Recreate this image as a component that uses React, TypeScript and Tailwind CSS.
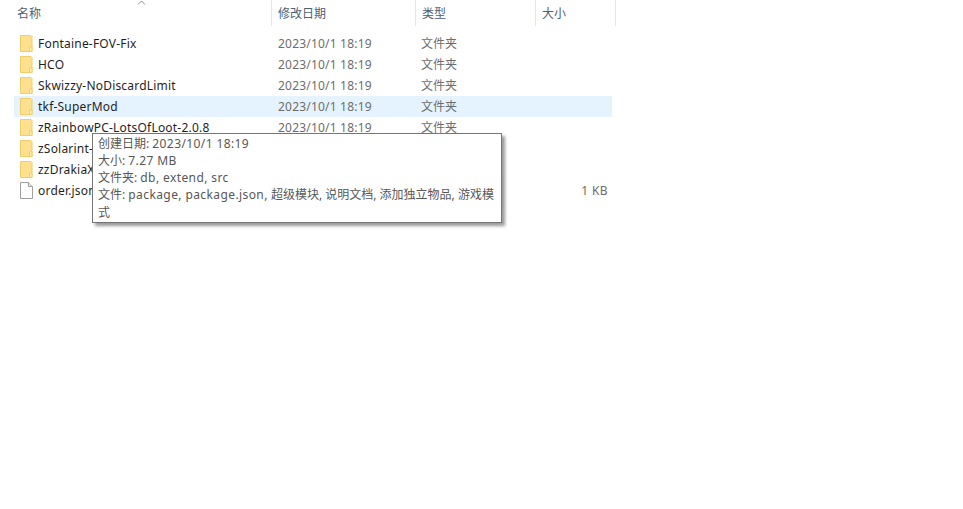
const FONT = "font-['Noto_Sans','Noto_Sans_CJK_SC',sans-serif]";

const rows = [
  { name: "Fontaine-FOV-Fix" },
  { name: "HCO" },
  { name: "Skwizzy-NoDiscardLimit" },
  { name: "tkf-SuperMod", active: true },
  { name: "zRainbowPC-LotsOfLoot-2.0.8" },
  // these three run in behind the tooltip, so name is cut at its edge
  { name: "zSolarint-", covered: true },
  { name: "zzDrakiaX", covered: true },
  { name: "order.json", file: true, covered: true },
];

function FolderIcon() {
  return (
    <svg width="14" height="17" viewBox="0 0 14 17" className="shrink-0">
      <path d="M1.5 0.5 H12 L13 1.5 V16.5 H1.5 Z" fill="#ffe08c" stroke="#f0cd6c" />
      <path d="M10.5 12 V16.5 H13 V11.5 Z" fill="#ffedb8" stroke="#f0cd6c" />
    </svg>
  );
}

function FileIcon() {
  return (
    <svg width="14" height="17" viewBox="0 0 14 17" className="shrink-0">
      <path d="M1.5 0.5 H9.5 L13.5 4.5 V16.5 H1.5 Z" fill="#fff" stroke="#a0a0a0" />
      <path d="M9.5 0.5 V4.5 H13.5" fill="#e8e8e8" stroke="#a0a0a0" />
    </svg>
  );
}

// Latin runs are set a bit wider than the CJK around them
function L({ children }: { children: string }) {
  return <span className="tracking-[0.4px]">{children}</span>;
}

export default function App() {
  return (
    <div className={`relative h-[509px] w-[963px] overflow-hidden bg-white text-[12px] ${FONT}`}>
      <div className="relative flex h-[26px] text-[#4c607a]">
        <div className="w-[272px] border-r border-[#e5e5e5] pl-[17px] leading-[27px]">名称</div>
        <div className="w-[144px] border-r border-[#e5e5e5] pl-[6px] leading-[27px]">修改日期</div>
        <div className="w-[120px] border-r border-[#e5e5e5] pl-[6px] leading-[27px]">类型</div>
        <div className="w-[80px] border-r border-[#e5e5e5] pl-[6px] leading-[27px]">大小</div>
        <svg width="9" height="6" viewBox="0 0 9 6" className="absolute left-[137px] top-0">
          <path d="M1 4.5 L4.5 1 L8 4.5" fill="none" stroke="#8c8c8c" />
        </svg>
      </div>
      <div className="ml-[14px] mt-[7px] w-[598px]">
        {rows.map((row) => (
          <div key={row.name} className={`flex h-[21px] items-center ${row.active ? "bg-[#e5f3ff]" : ""}`}>
            <div className="flex w-[258px] items-center pl-[5px]">
              {row.file ? <FileIcon /> : <FolderIcon />}
              <span
                className={`ml-[5px] whitespace-nowrap tracking-[0.2px] text-[#1f1f1f] ${row.covered ? "max-w-[54px] overflow-hidden" : ""}`}
              >
                {row.name}
              </span>
            </div>
            <div className="w-[143px] pl-[6px] tracking-[0.2px] text-[#6d6d6d]">
              {row.covered ? "" : "2023/10/1 18:19"}
            </div>
            <div className="w-[120px] pl-[6px] text-[#6d6d6d]">{row.covered ? "" : "文件夹"}</div>
            <div className="w-[73px] text-right tracking-[0.4px] text-[#6d6d6d]">{row.file ? "1 KB" : ""}</div>
          </div>
        ))}
      </div>
      <div className="absolute left-[92px] top-[133px] h-[90px] w-[410px] border border-[#767676] bg-white px-[5px] pt-[1px] text-[12px] leading-[17px] text-[#575757] shadow-[3px_3px_3px_rgba(0,0,0,0.4)]">
        <div>创建日期: <L>2023/10/1 18:19</L></div>
        <div>大小: <L>7.27 MB</L></div>
        <div>文件夹: <L>db, extend, src</L></div>
        <div className="leading-[17.5px]">文件: <L>package, package.json,</L> 超级模块, 说明文档, 添加独立物品, 游戏模式</div>
      </div>
    </div>
  );
}
